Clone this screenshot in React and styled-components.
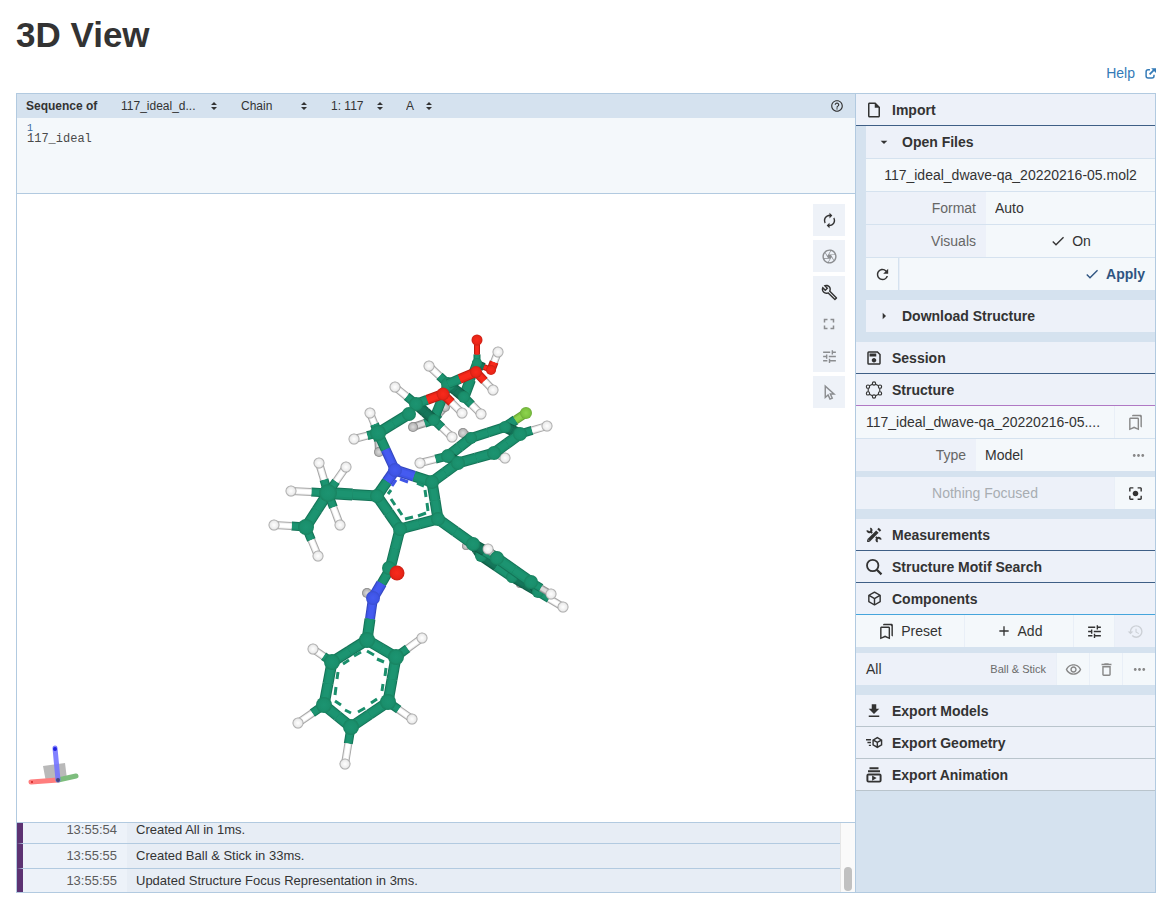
import React from "react";
import styled, { createGlobalStyle, css } from "styled-components";
import {
  MdAutorenew, MdOutlineCamera, MdOutlineBuild, MdFullscreen, MdTune, MdHelpOutline,
  MdCheck, MdRefresh, MdOutlineSave, MdMoreHoriz, MdCenterFocusStrong,
  MdAdd, MdRestore, MdOutlineBookmarks, MdGetApp, MdOutlineRemoveRedEye, MdDeleteOutline,
  MdOutlineInsertDriveFile, MdArrowDropDown, MdArrowRight,
} from "react-icons/md";

const GlobalStyle = createGlobalStyle`
  *, *::before, *::after { box-sizing: border-box; }
  body {
    margin: 0;
    background: #fff;
    color: #333;
    font: 14px/20px "Liberation Sans", Arial, sans-serif;
  }
  button, select, input { font: inherit; color: inherit; }
  svg { display: block; flex: none; }
`;

const Page = styled.main`
  padding: 15px 17px 7px 16px;
`;
const Title = styled.h1`
  margin: 0;
  font-size: 35px;
  line-height: 40px;
  font-weight: 700;
`;
const HelpBar = styled.div`
  display: flex;
  justify-content: flex-end;
  padding: 8px 0 10px;
`;
const HelpLink = styled.a`
  display: flex;
  align-items: center;
  gap: 10px;
  color: #337ab7;
  text-decoration: none;
`;
const Viewer = styled.div`
  display: grid;
  grid-template-columns: minmax(0, 1fr) 301px;
  min-height: calc(100vh - 100px);
  border-top: 1px solid #b2cae0;
`;
const Main = styled.section`
  display: flex;
  flex-direction: column;
  border-left: 1px solid #b2cae0;
`;

/* Sequence panel */
const SequenceHeader = styled.header`
  display: flex;
  align-items: center;
  height: 24px;
  padding: 0 11px 0 9px;
  background: #d5e2ef;
  font-size: 12px;
`;
const SequenceTitle = styled.strong`
  width: 95px;
`;
const Picker = styled.label`
  display: flex;
  align-items: center;
  justify-content: space-between;
  width: ${(p) => p.$width}px;
  margin-right: ${(p) => p.$after}px;
`;
const PickerSelect = styled.select`
  appearance: none;
  flex: 1;
  min-width: 0;
  margin: 0;
  padding: 0;
  border: 0;
  background: none;
`;
const IconButton = styled.button`
  display: flex;
  align-items: center;
  justify-content: center;
  margin: 0;
  padding: 0;
  border: 0;
  background: none;
`;
const HelpButton = styled(IconButton)`
  margin-left: auto;
`;
const Sequence = styled.div`
  height: 76px;
  padding: 6px 10px;
  background: #f4f8fb;
  border-bottom: 1px solid #b2cae0;
  color: #4a4a4a;
  font: 12px/10px "Liberation Mono", "Courier New", monospace;
`;
const ResidueNumber = styled.div`
  color: #376a9f;
  font-size: 10px;
`;

/* 3D canvas */
const Canvas = styled.div`
  position: relative;
  flex: 1;
  min-height: 420px;
`;
const Molecule = styled.svg`
  position: absolute;
  inset: 0;
  width: 100%;
  height: 100%;
`;
const Axes = styled.svg`
  position: absolute;
  left: 8px;
  bottom: 34px;
`;
const Tools = styled.div`
  position: absolute;
  top: 10px;
  right: 10px;
  display: grid;
  gap: 4px;
`;
const ToolGroup = styled.div`
  background: #eef2f8;
`;
const Tool = styled(IconButton)`
  width: 32px;
  height: 32px;
  color: ${(p) => (p.$dim ? "#8b8d90" : "#333")};
`;

/* Log */
const LogArea = styled.div`
  display: flex;
  height: 71px;
  border: solid #b2cae0;
  border-width: 1px 0;
`;
const Log = styled.ul`
  display: flex;
  flex: 1;
  flex-direction: column;
  justify-content: flex-end;
  margin: 0;
  padding: 0;
  overflow: hidden;
  list-style: none;
  font-size: 13px;
`;
const LogRow = styled.li`
  display: flex;
  flex: none;
  height: 25px;
  line-height: 24px;
  background: #e7edf5;
  border-left: 6px solid #5c3272;
  & + & { border-top: 1px solid #b2cae0; }
  &:last-child { height: 24px; }
`;
const LogTime = styled.time`
  width: 104px;
  padding-right: 10px;
  background: #edf2f9;
  color: #5c5c5c;
  text-align: right;
`;
const LogText = styled.span`
  padding-left: 9px;
`;
const ScrollTrack = styled.div`
  display: flex;
  align-items: flex-end;
  justify-content: center;
  width: 15px;
  padding-bottom: 1px;
  background: #fafafa;
  border-left: 1px solid #e6e6e6;
`;
const ScrollThumb = styled.div`
  width: 8px;
  height: 24px;
  border-radius: 4px;
  background: #c1c1c1;
`;

/* Control panel */
const Sidebar = styled.aside`
  background: #d5e2ef;
  border: solid #b2cae0;
  border-width: 0 1px 1px;
`;
const headerRow = css`
  display: flex;
  align-items: center;
  width: 100%;
  height: 32px;
  margin: 0;
  border: 0;
  background: #edf1f9;
  font-weight: 700;
  text-align: left;
`;
const SectionHeader = styled.button`
  ${headerRow}
  gap: 8px;
  padding: 0 8px;
  border-bottom: 1px solid ${(p) => p.$line};
`;
const IconSlot = styled.span`
  display: flex;
  justify-content: center;
  width: 20px;
`;
const GroupHeader = styled.button`
  ${headerRow}
  gap: 8px;
  padding: 0 8px;
`;
const SectionBody = styled.div`
  display: grid;
  gap: 10px;
  padding-bottom: 10px;
  padding-left: ${(p) => (p.$indent ? 10 : 0)}px;
`;
const Stack = styled.div`
  display: grid;
  gap: ${(p) => p.$gap || 1}px;
`;
const Row = styled.div`
  display: flex;
  gap: ${(p) => p.$gap || 0}px;
  height: 32px;
`;
const Cell = styled.button`
  display: flex;
  align-items: center;
  justify-content: ${(p) => p.$align || "center"};
  gap: 6px;
  flex: ${(p) => (p.$width ? `0 0 ${p.$width}px` : "1 1 0")};
  min-width: 0;
  margin: 0;
  padding: 0 ${(p) => p.$pad || 0}px;
  border: 0;
  background: ${(p) => (p.$soft ? "#edf1f9" : "#f4f8fb")};
  color: ${(p) => p.$color || "#333"};
  font-weight: ${(p) => (p.$bold ? 700 : 400)};
  white-space: nowrap;
  & + & { border-left: ${(p) => (p.$divided ? "1px solid #e9eff7" : "0")}; }
`;
const FieldLabel = styled.label`
  flex: none;
  width: 120px;
  padding-right: 10px;
  background: #edf1f9;
  color: #666;
  line-height: 32px;
  text-align: right;
`;
const FieldSelect = styled.select`
  appearance: none;
  flex: 1;
  min-width: 0;
  margin: 0;
  padding: 0 9px;
  border: 0;
  border-radius: 0;
  background: #f4f8fb;
`;
const Small = styled.small`
  font-size: 11px;
  color: #6b6b6b;
`;
const Spread = styled(Cell)`
  justify-content: space-between;
`;

const ICON = 18;

const SortIcon = () => (
  <svg width="6" height="8" viewBox="0 0 6 8" fill="#333"><path d="M3 0l3 3H0zM3 8L0 5h6z" /></svg>
);
const ExternalIcon = () => (
  <svg width="11" height="11" viewBox="0 0 12 12" fill="none" stroke="#337ab7" strokeWidth="1.600">
    <path d="M5.400 2H3.400C2 2 1.200 2.800 1.200 4.200v4.400c0 1.400.8 2.200 2.200 2.200h4.200c1.400 0 2.200-.8 2.200-2.200V7.400" />
    <path d="M5 7l4.600-4.600" strokeWidth="2" />
    <path d="M6.700.2H12v5.300z" fill="#337ab7" stroke="none" />
  </svg>
);
const CursorIcon = () => (
  <svg width="17" height="17" viewBox="0 0 24 24" fill="none" stroke="currentColor" strokeWidth="2">
    <path d="M6 3v16l4-3.600 2.700 6 3.200-1.400-2.700-5.800h5.300z" />
  </svg>
);
const SearchIcon = () => (
  <svg width="18" height="18" viewBox="0 0 18 18" fill="none" stroke="currentColor" strokeWidth="1.800">
    <circle cx="7.700" cy="7.500" r="5.700" />
    <path d="M11.800 11.700l4.700 4.700" strokeWidth="2.200" />
  </svg>
);
const HexagonIcon = () => (
  <svg width="18" height="18" viewBox="0 0 24 24" fill="none" stroke="currentColor" strokeWidth="1.500">
    <path d="M10 4.200L5.800 6.200M14 4.200l4.200 2M4.300 9.600v4.800M19.700 9.600v4.800M5.800 17.800l4.200 2M18.200 17.800l-4.200 2" />
    {[[12, 3.300], [20, 7.500], [20, 16.500], [12, 20.700], [4, 16.500], [4, 7.500]].map(([x, y]) => (
      <circle key={`${x}-${y}`} cx={x} cy={y} r="2.200" />
    ))}
  </svg>
);
const ToolsIcon = () => (
  <svg width="18" height="18" viewBox="0 0 24 24" fill="none" stroke="currentColor">
    <path d="M6.500 6.500l11 11" strokeWidth="2.400" />
    <path d="M3 5.800C3.400 8 6 9 7.700 7.700S9 4 7 3" strokeWidth="2.600" />
    <path d="M21 18.200c-.4-2.200-3-3.200-4.700-1.900S15 20 17 21" strokeWidth="2.600" />
    <path d="M2.500 21.500L21.500 2.500" stroke="#edf1f9" strokeWidth="7" />
    <path d="M5 19L16.500 7.500" strokeWidth="4.600" />
    <path d="M18 6l2-2" strokeWidth="4.600" />
    <path d="M2.800 21.200v-4l4 4z" fill="currentColor" stroke="none" />
  </svg>
);
const CUBE = "M21,16.5C21,16.88 20.79,17.21 20.47,17.38L12.57,21.82C12.41,21.94 12.21,22 12,22C11.79,22 11.59,21.94 11.43,21.82L3.53,17.38C3.21,17.21 3,16.88 3,16.5V7.5C3,7.12 3.21,6.79 3.53,6.62L11.43,2.18C11.59,2.06 11.79,2 12,2C12.21,2 12.41,2.06 12.57,2.18L20.47,6.62C20.79,6.79 21,7.12 21,7.5V16.5M12,4.15L6.04,7.5L12,10.85L17.96,7.5L12,4.15M5,15.91L11,19.29V12.58L5,9.21V15.91M19,15.91V9.21L13,12.58V19.29L19,15.91Z";
const CubeIcon = () => (
  <svg width="17" height="17" viewBox="0 0 24 24" fill="currentColor"><path d={CUBE} /></svg>
);
const CubeSendIcon = () => (
  <svg width="17" height="17" viewBox="0 0 24 24" fill="currentColor">
    <path d="M16,4L9,8.04V15.96L16,20L23,15.96V8.04M16,6.31L19.8,8.5L16,10.69L12.21,8.5M0,7V9H7V7M11,10.11L15,12.42V17.11L11,14.81M21,10.11V14.81L17,17.11V12.42M2,11V13H7V11M4,15V17H7V15" />
  </svg>
);
const AnimationIcon = () => (
  <svg width="18" height="18" viewBox="0 0 24 24" fill="none" stroke="currentColor">
    <path d="M6 3h12M4 7h16" strokeWidth="2.600" />
    <rect x="3.200" y="11.200" width="17.600" height="9.600" rx="1.500" strokeWidth="2.600" />
    <path d="M9.500 12.500v7l6-3.500z" fill="currentColor" stroke="none" />
  </svg>
);

/* Molecule model: projected atoms, drawn back to front */
const COLORS = {
  C: { base: "#1a8f6c", edge: "#147357", light: "#1c9471", rim: "#18825f" },
  D: { base: "#136e53", edge: "#0f5a44", light: "#14755a", rim: "#0f5a44" },
  N: { base: "#3f55e6", edge: "#3446bd", light: "#455bf0", rim: "#394dd0" },
  O: { base: "#ea2517", edge: "#b81c11", light: "#f82a1c", rim: "#c92015" },
  H: { base: "#ececec", edge: "#a8a8a8", light: "#ffffff", rim: "#9a9a9a" },
  G: { base: "#b8b8b8", edge: "#909090", light: "#dcdcdc", rim: "#7c7c7c" },
  F: { base: "#7ec440", edge: "#669f36", light: "#8ed44e", rim: "#6dab39" },
};

const bond = (x1, y1, x2, y2, a = "C", b = a, w = 11, w2 = w, t = 0.5) => ({ kind: "bond", x1, y1, x2, y2, a, b, w, w2, t });
const atom = (x, y, el = "C", r = 7) => ({ kind: "atom", x, y, r, el });
const hydrogen = (x1, y1, x2, y2, el = "H", c = "C", t = 0.45) => [
  bond(x1, y1, x2, y2, c, el, 9, 8, t), atom(x2, y2, el, el === "G" ? 5 : 5.5),
];

const SCENE = [
  // Acid chain
  ...hydrogen(434, 419, 445, 407, "G"),
  bond(477, 364, 491, 370, "D", "O", 8, 6),
  ...hydrogen(491, 370, 498, 352, "H", "O"),
  atom(491, 370, "O", 5),
  bond(477, 364, 477, 340, "C", "O", 7, 6, 0.4),
  atom(477, 340, "O", 5.5),
  bond(464, 397, 477, 362, "C", "C", 11, 9),
  atom(477, 363, "C", 5),
  ...hydrogen(464, 397, 481, 414),
  ...hydrogen(448, 384, 429, 366),
  bond(448, 384, 464, 397, "D", "D", 11),
  atom(464, 397, "C", 6),
  bond(434, 419, 448, 384, "C", "C", 10),
  atom(448, 384, "C", 7),
  bond(448, 384, 476, 372, "C", "O", 10, 10, 0.42),
  ...hydrogen(476, 372, 493, 390, "H", "O", 0.5),
  atom(476, 372, "O", 6),
  ...hydrogen(416, 404, 395, 387),
  ...hydrogen(434, 420, 413, 427, "G"),
  ...hydrogen(434, 420, 452, 437),
  bond(416, 404, 434, 420, "D", "D", 11),
  atom(434, 420, "C", 6),
  ...hydrogen(443, 394, 462, 413, "H", "O"),
  bond(416, 404, 443, 394, "C", "O", 10, 10, 0.42),
  atom(443, 394, "O", 6.5),
  atom(416, 404, "C", 7),
  bond(378, 433, 409, 414, "C", "C", 11),
  atom(409, 414, "C", 7),
  ...hydrogen(378, 433, 379, 452, "G"),
  ...hydrogen(378, 433, 370, 413),
  ...hydrogen(378, 433, 354, 439),
  bond(378, 433, 395, 470, "C", "N", 10, 10, 0.45),
  atom(378, 433, "C", 8),
  // Fluorophenyl ring
  ...hydrogen(471, 438, 463, 433, "G"),
  bond(448, 456, 471, 438, "C", "C", 11),
  bond(471, 438, 505, 427, "C", "C", 10),
  atom(471, 438, "C", 6),
  bond(505, 427, 526, 413, "C", "F", 10, 9),
  atom(526, 413, "F", 6),
  bond(505, 427, 520, 434, "D", "D", 11),
  atom(505, 427, "C", 6),
  ...hydrogen(448, 456, 420, 463),
  ...hydrogen(494, 453, 505, 458, "H", "D"),
  ...hydrogen(520, 434, 547, 426),
  bond(520, 434, 494, 453, "C", "C", 11),
  atom(520, 434, "C", 7),
  bond(494, 453, 458, 463, "C", "C", 11),
  atom(494, 453, "C", 7),
  bond(448, 456, 458, 463, "D", "D", 11),
  atom(448, 456, "C", 7),
  bond(458, 463, 432, 482, "C", "C", 11),
  atom(458, 463, "C", 7),
  // Pyrrole ring
  bond(395, 470, 432, 482, "N", "C", 11, 11, 0.52),
  bond(395, 470, 377, 496, "N", "C", 11, 11, 0.45),
  bond(432, 482, 438, 519),
  bond(438, 519, 400, 529),
  bond(400, 529, 377, 496),
  bond(377, 496, 328, 493, "C", "C", 11, 12),
  atom(395, 470, "N", 7),
  atom(432, 482),
  atom(377, 496),
  // Isopropyl group
  ...hydrogen(328, 493, 319, 463),
  ...hydrogen(328, 493, 291, 491),
  bond(328, 493, 306, 527),
  ...hydrogen(306, 527, 274, 525),
  ...hydrogen(306, 527, 318, 556),
  atom(306, 527, "C", 8),
  ...hydrogen(328, 493, 346, 467),
  ...hydrogen(328, 493, 340, 525),
  atom(328, 493, "C", 9),
  // Side phenyl ring, seen edge-on
  atom(466, 546, "G", 4),
  atom(520, 584, "G", 4),
  bond(473, 544, 481, 556, "D", "D", 10),
  bond(481, 556, 512, 577, "D", "C", 10),
  bond(512, 577, 538, 592, "D", "D", 10),
  atom(481, 556, "C", 6),
  atom(512, 577, "C", 6),
  ...hydrogen(538, 592, 563, 607),
  bond(531, 582, 538, 592, "D", "D", 10),
  atom(538, 592, "C", 6),
  bond(438, 519, 473, 544),
  bond(473, 544, 497, 558, "D", "C", 11),
  bond(497, 558, 531, 582),
  atom(473, 544, "C", 7),
  bond(531, 582, 551, 594, "C", "G", 9, 7),
  atom(551, 594, "H", 5.5),
  atom(531, 582, "C", 7),
  bond(497, 558, 488, 549, "C", "G", 8, 7),
  atom(497, 558, "C", 7),
  atom(488, 549, "H", 5.5),
  atom(438, 519),
  // Amide
  bond(400, 529, 390, 569),
  atom(400, 529),
  atom(367, 593, "G", 5),
  bond(390, 569, 373, 598, "C", "N", 10, 11),
  atom(389, 568, "C", 7),
  atom(397, 573, "O", 7.5),
  bond(373, 598, 367, 640, "N", "C", 10, 11),
  atom(373, 598, "N", 7),
  // Phenyl ring
  ...hydrogen(396, 657, 422, 638),
  ...hydrogen(388, 702, 412, 719),
  ...hydrogen(351, 727, 345, 764),
  ...hydrogen(324, 705, 298, 723),
  ...hydrogen(332, 662, 313, 649),
  bond(367, 640, 396, 657),
  bond(396, 657, 388, 702),
  bond(388, 702, 351, 727),
  bond(351, 727, 324, 705),
  bond(324, 705, 332, 662),
  bond(332, 662, 367, 640),
  atom(367, 640, "C", 8),
  atom(396, 657, "C", 8),
  atom(388, 702, "C", 8),
  atom(351, 727, "C", 8),
  atom(324, 705, "C", 8),
  atom(332, 662, "C", 8),
];

const AROMATIC = [
  ["C", "M343 664l6-4M354 656l7-4M367 651l7 4M377 659l7 3M386 668l-1 8M383 684l-1 7M377 699l-6 4M365 708l-7 4M351 713l-6-3M341 705l-6-4M335 695l1-8M337 679l1-7"],
  ["C", "M417 483l7 3M425 490l1 7M427 503l1 8M426 513l-8 3M413 517l-8 2M402 515l-4-6M395 505l-4-6M388 494l3-4"],
  ["N", "M392 486l4-6M400 479l8 3"],
];

function Segment({ x1, y1, x2, y2, el, w }) {
  const c = COLORS[el];
  const line = { x1, y1, x2, y2 };
  return (
    <g>
      <line {...line} stroke={c.edge} strokeWidth={w} />
      <line {...line} stroke={c.base} strokeWidth={w - 2} />
      <line {...line} stroke={c.light} strokeWidth={w / 2} />
    </g>
  );
}

function Bond({ x1, y1, x2, y2, a, b, w, w2, t }) {
  const mx = x1 + (x2 - x1) * t;
  const my = y1 + (y2 - y1) * t;
  return (
    <g>
      <Segment x1={x1} y1={y1} x2={mx} y2={my} el={a} w={w} />
      <Segment x1={mx} y1={my} x2={x2} y2={y2} el={b} w={w2} />
    </g>
  );
}

function MoleculeView() {
  return (
    <Molecule viewBox="17 194 838 628" role="img" aria-label="Ball and stick model">
      <defs>
        {Object.entries(COLORS).map(([el, c]) => (
          <radialGradient key={el} id={`ball-${el}`}>
            <stop offset="0" stopColor={c.light} />
            <stop offset="0.7" stopColor={c.base} />
            <stop offset="1" stopColor={c.rim} />
          </radialGradient>
        ))}
      </defs>
      {SCENE.map((item, i) =>
        item.kind === "bond"
          ? <Bond key={i} {...item} />
          : <circle key={i} cx={item.x} cy={item.y} r={item.r} fill={`url(#ball-${item.el})`} />
      )}
      {AROMATIC.map(([el, d]) => (
        <path key={d} d={d} fill="none" stroke={COLORS[el].base} strokeWidth="3" />
      ))}
    </Molecule>
  );
}

function AxesView() {
  return (
    <Axes width="56" height="44" viewBox="25 744 56 44" aria-hidden="true">
      <path d="M43 766l22-3 2 16-21 3z" fill="#b9b9b9" />
      <g fill="none" strokeWidth="5" strokeLinecap="round">
        <path d="M31 782l27-2" stroke="#ff7d7d" />
        <path d="M58 780l18-4" stroke="#7dbd7d" />
        <path d="M55 748l3 32" stroke="#7474ff" strokeOpacity="0.9" />
      </g>
      <circle cx="55" cy="749" r="2" fill="#2020e0" />
      <circle cx="32" cy="782" r="1" fill="#d02020" />
      <circle cx="58" cy="780" r="2" fill="#45457a" />
    </Axes>
  );
}

const PICKERS = [
  { name: "Structure", value: "117_ideal_d...", width: 96, after: 24 },
  { name: "Mode", value: "Chain", width: 66, after: 24 },
  { name: "Entity", value: "1: 117", width: 52, after: 23 },
  { name: "Chain ID", value: "A", width: 26, after: 0 },
];

const LOG = [
  ["13:55:54", "Created All in 1ms."],
  ["13:55:55", "Created Ball & Stick in 33ms."],
  ["13:55:55", "Updated Structure Focus Representation in 3ms."],
];

function Section({ icon, title, line = "#3f5f86" }) {
  return (
    <SectionHeader type="button" $line={line}>
      <IconSlot>{icon}</IconSlot>{title}
    </SectionHeader>
  );
}

export default function App() {
  return (
    <Page>
      <GlobalStyle />
      <Title>3D View</Title>
      <HelpBar><HelpLink href="#help">Help <ExternalIcon /></HelpLink></HelpBar>
      <Viewer>
        <Main>
          <SequenceHeader>
            <SequenceTitle>Sequence of</SequenceTitle>
            {PICKERS.map((p) => (
              <Picker key={p.name} $width={p.width} $after={p.after}>
                <PickerSelect aria-label={p.name}><option>{p.value}</option></PickerSelect>
                <SortIcon />
              </Picker>
            ))}
            <HelpButton type="button" aria-label="Sequence help"><MdHelpOutline size={14} /></HelpButton>
          </SequenceHeader>
          <Sequence>
            <ResidueNumber>1</ResidueNumber>
            <div>117_ideal</div>
          </Sequence>
          <Canvas>
            <MoleculeView />
            <AxesView />
            <Tools>
              <ToolGroup><Tool type="button" aria-label="Reset camera"><MdAutorenew size={17} /></Tool></ToolGroup>
              <ToolGroup><Tool type="button" aria-label="Screenshot" $dim><MdOutlineCamera size={17} /></Tool></ToolGroup>
              <ToolGroup>
                <Tool type="button" aria-label="Toggle controls"><MdOutlineBuild size={17} /></Tool>
                <Tool type="button" aria-label="Fullscreen" $dim><MdFullscreen size={18} /></Tool>
                <Tool type="button" aria-label="Settings" $dim><MdTune size={17} /></Tool>
              </ToolGroup>
              <ToolGroup><Tool type="button" aria-label="Selection mode" $dim><CursorIcon /></Tool></ToolGroup>
            </Tools>
          </Canvas>
          <LogArea>
            <Log>
              {LOG.map(([time, text]) => (
                <LogRow key={text}><LogTime>{time}</LogTime><LogText>{text}</LogText></LogRow>
              ))}
            </Log>
            <ScrollTrack><ScrollThumb /></ScrollTrack>
          </LogArea>
        </Main>
        <Sidebar>
          <Section icon={<MdOutlineInsertDriveFile size={ICON} />} title="Import" />
          <SectionBody $indent>
            <Stack>
              <GroupHeader type="button"><IconSlot><MdArrowDropDown size={16} /></IconSlot>Open Files</GroupHeader>
              <Row><Cell type="button">117_ideal_dwave-qa_20220216-05.mol2</Cell></Row>
              <Row>
                <FieldLabel htmlFor="format">Format</FieldLabel>
                <FieldSelect id="format"><option>Auto</option></FieldSelect>
              </Row>
              <Row>
                <FieldLabel htmlFor="visuals">Visuals</FieldLabel>
                <Cell id="visuals" type="button"><MdCheck size={16} />On</Cell>
              </Row>
              <Row $gap={1}>
                <Cell type="button" $width={32} aria-label="Reset"><MdRefresh size={17} /></Cell>
                <Cell type="button" $align="flex-end" $pad={10} $bold $color="#2e5481"><MdCheck size={16} />Apply</Cell>
              </Row>
            </Stack>
            <GroupHeader type="button"><IconSlot><MdArrowRight size={16} /></IconSlot>Download Structure</GroupHeader>
          </SectionBody>
          <Section icon={<MdOutlineSave size={ICON} />} title="Session" />
          <Section icon={<HexagonIcon />} title="Structure" line="#b078c4" />
          <SectionBody>
            <Stack $gap={6}>
              <Stack>
                <Row>
                  <Cell type="button" $align="flex-start" $pad={10}>117_ideal_dwave-qa_20220216-05....</Cell>
                  <Cell type="button" $width={41} $divided $color="#888" aria-label="Presets"><MdOutlineBookmarks size={17} /></Cell>
                </Row>
                <Row>
                  <FieldLabel htmlFor="type">Type</FieldLabel>
                  <FieldSelect id="type"><option>Model</option></FieldSelect>
                  <Cell type="button" $width={33} $color="#888" aria-label="Type options"><MdMoreHoriz size={17} /></Cell>
                </Row>
              </Stack>
              <Row>
                <Cell type="button" $soft $color="#a8adb2">Nothing Focused</Cell>
                <Cell type="button" $width={41} aria-label="Focus"><MdCenterFocusStrong size={17} /></Cell>
              </Row>
            </Stack>
          </SectionBody>
          <Section icon={<ToolsIcon />} title="Measurements" />
          <Section icon={<SearchIcon />} title="Structure Motif Search" />
          <Section icon={<CubeIcon />} title="Components" line="#45a5dc" />
          <SectionBody>
            <Stack $gap={6}>
              <Row>
                <Cell type="button" $divided><MdOutlineBookmarks size={17} />Preset</Cell>
                <Cell type="button" $divided><MdAdd size={16} />Add</Cell>
                <Cell type="button" $width={41} $divided aria-label="Options"><MdTune size={17} /></Cell>
                <Cell type="button" $width={41} $soft $color="#ccd0d6" aria-label="Undo"><MdRestore size={17} /></Cell>
              </Row>
              <Row>
                <Spread type="button" $soft $pad={10}>All <Small>Ball &amp; Stick</Small></Spread>
                <Cell type="button" $width={33} $color="#888" aria-label="Visibility"><MdOutlineRemoveRedEye size={17} /></Cell>
                <Cell type="button" $width={33} $divided $color="#888" aria-label="Remove"><MdDeleteOutline size={17} /></Cell>
                <Cell type="button" $width={33} $divided $color="#888" aria-label="More"><MdMoreHoriz size={17} /></Cell>
              </Row>
            </Stack>
          </SectionBody>
          <Section icon={<MdGetApp size={ICON} />} title="Export Models" line="#b9c4cc" />
          <Section icon={<CubeSendIcon />} title="Export Geometry" line="#b9c4cc" />
          <Section icon={<AnimationIcon />} title="Export Animation" line="#b9c4cc" />
        </Sidebar>
      </Viewer>
    </Page>
  );
}
